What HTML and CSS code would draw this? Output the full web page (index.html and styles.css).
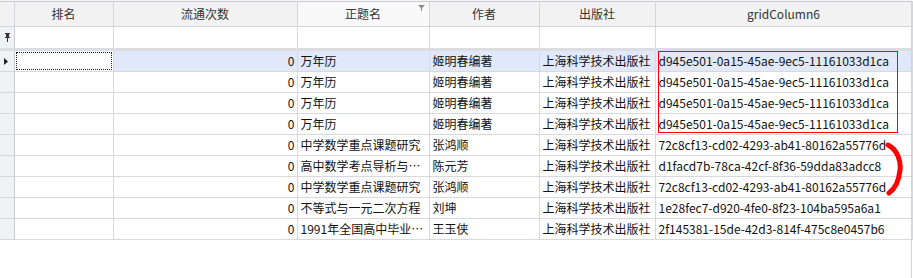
FILE: index.html
```html
<!DOCTYPE html>
<html>
  <head>
    <title>Grid</title>
    <link rel="stylesheet" href="styles.css">
  </head>
  <body>
    <div class="grid">
      <table class="grid-table">
        <colgroup>
          <col class="c-ind" />
          <col class="c-rank" />
          <col class="c-count" />
          <col class="c-title" />
          <col class="c-author" />
          <col class="c-pub" />
          <col class="c-guid" />
        </colgroup>
        <thead>
          <tr class="head-row">
            <th class="ind"></th>
            <th>排名</th>
            <th>流通次数</th>
            <th class="filtered">正题名
              <svg class="funnel" width="7" height="7" viewBox="0 0 7 7">
                <path d="M0 0H7L4 3V6H3V3Z" fill="#8a8a8a" />
              </svg>
            </th>
            <th>作者</th>
            <th>出版社</th>
            <th>gridColumn6</th>
          </tr>
          <tr class="filter-row">
            <td class="ind">
              <svg width="7" height="9" viewBox="0 0 7 9">
                <path d="M1 0H6V1H5V4H6V5H4V9H3V5H1V4H2V1H1Z" fill="#333" />
              </svg>
            </td>
            <td></td><td></td><td></td><td></td><td></td><td></td>
          </tr>
        </thead>
        <tbody>
          <tr class="selected">
            <td class="ind">
              <svg width="4" height="7" viewBox="0 0 4 7"><path d="M0 0L4 3.5L0 7Z" fill="#222" /></svg>
            </td>
            <td class="focus"><span></span></td>
            <td class="num">0</td>
            <td>万年历</td>
            <td>姬明春编著</td>
            <td>上海科学技术出版社</td>
            <td>d945e501-0a15-45ae-9ec5-11161033d1ca</td>
          </tr>
          <tr>
            <td class="ind"></td><td></td><td class="num">0</td>
            <td>万年历</td><td>姬明春编著</td><td>上海科学技术出版社</td>
            <td>d945e501-0a15-45ae-9ec5-11161033d1ca</td>
          </tr>
          <tr>
            <td class="ind"></td><td></td><td class="num">0</td>
            <td>万年历</td><td>姬明春编著</td><td>上海科学技术出版社</td>
            <td>d945e501-0a15-45ae-9ec5-11161033d1ca</td>
          </tr>
          <tr>
            <td class="ind"></td><td></td><td class="num">0</td>
            <td>万年历</td><td>姬明春编著</td><td>上海科学技术出版社</td>
            <td>d945e501-0a15-45ae-9ec5-11161033d1ca</td>
          </tr>
          <tr>
            <td class="ind"></td><td></td><td class="num">0</td>
            <td>中学数学重点课题研究</td><td>张鸿顺</td><td>上海科学技术出版社</td>
            <td>72c8cf13-cd02-4293-ab41-80162a55776d</td>
          </tr>
          <tr>
            <td class="ind"></td><td></td><td class="num">0</td>
            <td>高中数学考点导析与…</td><td>陈元芳</td><td>上海科学技术出版社</td>
            <td>d1facd7b-78ca-42cf-8f36-59dda83adcc8</td>
          </tr>
          <tr>
            <td class="ind"></td><td></td><td class="num">0</td>
            <td>中学数学重点课题研究</td><td>张鸿顺</td><td>上海科学技术出版社</td>
            <td>72c8cf13-cd02-4293-ab41-80162a55776d</td>
          </tr>
          <tr>
            <td class="ind"></td><td></td><td class="num">0</td>
            <td>不等式与一元二次方程</td><td>刘坤</td><td>上海科学技术出版社</td>
            <td>1e28fec7-d920-4fe0-8f23-104ba595a6a1</td>
          </tr>
          <tr>
            <td class="ind"></td><td></td><td class="num">0</td>
            <td>1991年全国高中毕业…</td><td>王玉侠</td><td>上海科学技术出版社</td>
            <td>2f145381-15de-42d3-814f-475c8e0457b6</td>
          </tr>
        </tbody>
      </table>

      <div class="mark-box"></div>
      <svg class="mark-brace" width="24" height="56" viewBox="0 0 24 56">
        <path d="M4 3C14 8 17 20 16 28C15 38 12 46 5 51" fill="none" stroke="#f00" stroke-width="5" stroke-linecap="round" />
      </svg>
    </div>
  </body>
</html>
```

FILE: styles.css
```css
body {
  margin: 0;
  background: #fff;
  font-family: "Noto Sans CJK SC", "Noto Sans", sans-serif;
  font-size: 12px;
  color: #111;
}
.grid {
  position: relative;
  width: 912px;
  height: 278px;
  border-top: 1px solid #f5f5f5;
  box-sizing: border-box;
}
.grid::after {
  content: "";
  position: absolute;
  left: 911px;
  top: 1px;
  bottom: 0;
  border-left: 1px solid #d2d4da;
}
.grid-table {
  table-layout: fixed;
  border-collapse: collapse;
  width: 912px;
  border-top: 1px solid #c9cbd1;
}
.c-ind { width: 14px; }
.c-rank { width: 99px; }
.c-count { width: 184px; }
.c-title { width: 132px; }
.c-author { width: 110px; }
.c-pub { width: 116px; }
.c-guid { width: 257px; }

th,
td {
  border: 1px solid #d8d9de;
  padding: 0 3px;
  white-space: nowrap;
  overflow: hidden;
  line-height: 20px;
  height: 20px;
  box-sizing: border-box;
}
tr > :first-child {
  border-left: none;
}
.head-row th {
  height: 25px;
  font-weight: normal;
  color: #333;
  background: #f2f2f3;
  border-color: #d5d6dc;
  border-top: none;
  position: relative;
}
.head-row th.filtered {
  background: #f9f9fa;
}
.funnel {
  position: absolute;
  right: 4px;
  top: 3px;
}
.filter-row td {
  height: 23px;
  border-bottom: 3px solid #dcdde2;
}
.ind {
  background: #f1f2f5;
  padding: 0;
  text-align: center;
  border-right: 1px solid #c9ccd4;
}
.ind svg {
  display: block;
  margin: 0 auto 0 4px;
}
tbody td {
  height: 21px;
}
.num {
  text-align: right;
  padding-right: 2px;
}
.selected td {
  background: #e0e8f9;
}
.selected td.ind {
  background: #f1f2f5;
}
.selected td.focus {
  background: #fff;
  padding: 1px;
}
.focus span {
  display: block;
  height: 18px;
  border: 1px dotted #222;
  box-sizing: border-box;
}
.mark-box {
  position: absolute;
  left: 658px;
  top: 50px;
  width: 240px;
  height: 82px;
  border: 1px solid #f00;
  box-sizing: border-box;
}
.mark-brace {
  position: absolute;
  left: 884px;
  top: 141px;
}
```
